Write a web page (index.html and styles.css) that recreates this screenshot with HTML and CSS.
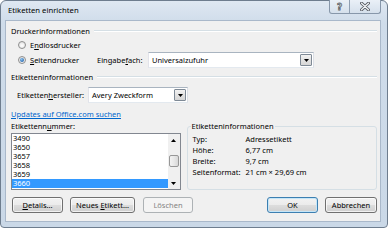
FILE: index.html
```html
<!DOCTYPE html>
<html lang="de">
<head>
<meta charset="utf-8">
<title>Etiketten einrichten</title>
<link rel="stylesheet" href="styles.css">
</head>
<body>
<div class="win">
  <div class="titlebar">
    <span class="title">Etiketten einrichten</span>
    <div class="caption">
      <span class="cbtn help">?</span>
      <span class="cbtn close"><svg width="10" height="9" viewBox="0 0 10 9"><path d="M1.5 1.2L8.5 7.8M8.5 1.2L1.5 7.8" stroke="#5a5f66" stroke-width="3" stroke-linecap="round"/><path d="M1.5 1.2L8.5 7.8M8.5 1.2L1.5 7.8" stroke="#f4f6f9" stroke-width="1.2" stroke-linecap="round"/></svg></span>
    </div>
  </div>
  <div class="client">
    <div class="head"><span>Druckerinformationen</span><i></i></div>
    <div class="rrow r1"><span class="radio"></span><span class="rlabel">E<u>n</u>dlosdrucker</span></div>
    <div class="rrow r2"><span class="radio on"></span><span class="rlabel"><u>S</u>eitendrucker</span><span class="flabel">Eingabe<u>f</u>ach:</span>
      <div class="combo wide"><span class="val">Universalzufuhr</span><span class="drop"><svg width="5" height="3" viewBox="0 0 5 3"><path d="M0 0H5L2.5 3Z" fill="#000"/></svg></span></div>
    </div>
    <div class="head h2"><span>Etiketteninformationen</span><i></i></div>
    <div class="mrow"><span class="mlabel">Etiketten<u>h</u>ersteller:</span>
      <div class="combo narrow"><span class="val">Avery Zweckform</span><span class="drop"><svg width="5" height="3" viewBox="0 0 5 3"><path d="M0 0H5L2.5 3Z" fill="#000"/></svg></span></div>
    </div>
    <div class="linkrow"><a class="link">Updates auf Office.com suchen</a></div>
    <div class="lower">
      <div class="listcol">
        <div class="llabel">Etikettenn<u>u</u>mmer:</div>
        <div class="listbox">
          <ul class="items">
            <li>3490</li>
            <li>3650</li>
            <li>3657</li>
            <li>3658</li>
            <li>3659</li>
            <li class="sel">3660</li>
          </ul>
          <div class="vscroll">
            <span class="sarrow"><svg width="5" height="3" viewBox="0 0 5 3"><path d="M0 3H5L2.5 0Z" fill="#000"/></svg></span>
            <span class="track"><span class="thumb"></span></span>
            <span class="sarrow"><svg width="5" height="3" viewBox="0 0 5 3"><path d="M0 0H5L2.5 3Z" fill="#000"/></svg></span>
          </div>
        </div>
      </div>
      <fieldset class="info">
        <legend>Etiketteninformationen</legend>
        <div class="irow"><span class="k">Typ:</span><span>Adressetikett</span></div>
        <div class="irow"><span class="k">Höhe:</span><span>6,77 cm</span></div>
        <div class="irow"><span class="k">Breite:</span><span>9,7 cm</span></div>
        <div class="irow"><span class="k">Seitenformat:</span><span>21 cm × 29,69 cm</span></div>
      </fieldset>
    </div>
    <div class="btnrow">
      <button class="btn b-details"><u>D</u>etails...</button>
      <button class="btn b-new">Neues <u>E</u>tikett...</button>
      <button class="btn b-del" disabled>Löschen</button>
      <span class="spacer"></span>
      <button class="btn b-ok default">OK</button>
      <button class="btn b-cancel">Abbrechen</button>
    </div>
  </div>
</div>
</body>
</html>
```

FILE: styles.css
```css
* { box-sizing: border-box; margin: 0; padding: 0; }
html, body { width: 388px; height: 228px; overflow: hidden; background: #ffffff; }
body { font-family: "Noto Sans", "Liberation Sans", sans-serif; font-size: 7.5px; color: #000; }
u { text-decoration: underline; text-underline-offset: 1px; }

.win {
  width: 388px; height: 228px;
  border: 1px solid #6e7d8e;
  border-radius: 6px 6px 4px 4px;
  background: linear-gradient(#dfe8f2, #cfdcea 22px, #cad8e7);
  padding: 0 6px 5px 4px;
  display: flex; flex-direction: column;
}
.titlebar { height: 19px; display: flex; align-items: flex-start; }
.title { padding-left: 3px; line-height: 19px; font-size: 7.7px; color: #000; }
.caption {
  margin-left: auto; margin-top: -1px; margin-right: 0;
  display: flex; height: 14px;
  border: 1px solid #8797aa; border-top: none;
  border-radius: 0 0 3px 3px;
  background: linear-gradient(#eaf0f7, #d5e0ec);
}
.cbtn { display: flex; align-items: center; justify-content: center; height: 13px; }
.help { width: 20px; border-right: 1px solid #8f9fb2; font-weight: bold; font-size: 9px; color: #f4f6f9;
  -webkit-text-stroke: 0.8px #5a5f66; font-family: "DejaVu Sans", sans-serif; }
.close { width: 30px; }

.client {
  flex: 1;
  background: #f0f0f0;
  border: 1px solid #a9b8ca;
  padding: 4px 3px 6px 5px;
  display: flex; flex-direction: column;
}

.head { height: 12px; display: flex; align-items: center; }
.head span { color: #000; padding-right: 4px; }
.head i { flex: 1; background: #d5dfe5; border-bottom: 1px solid #ffffff; height: 2px; }
.h2 { margin-top: 3px; }

.rrow { display: flex; align-items: center; padding-left: 7px; }
.r1 { height: 14px; margin-top: 1px; }
.r2 { height: 16px; }
.radio {
  width: 8px; height: 8px; border-radius: 50%;
  border: 1px solid #8e8f8f;
  background: radial-gradient(circle at 50% 60%, #ffffff 0, #f2f2f2 40%, #d7d7d7 100%);
  display: flex; align-items: center; justify-content: center;
  flex: none;
}
.radio.on::after {
  content: ""; width: 4px; height: 4px; border-radius: 50%;
  background: radial-gradient(circle at 40% 35%, #8ec5f0, #1e5fa8 80%);
}
.rlabel { margin-left: 4px; width: 67px; }
.flabel { width: 51px; }

.combo {
  height: 16px; background: #fff;
  border: 1px solid #abadb3;
  border-top-color: #a9b4c0; border-left-color: #e2e3ea; border-right-color: #dbdfe6; border-bottom-color: #e3e9ef;
  display: flex; align-items: center; padding: 1px;
}
.combo.wide { width: 166px; height: 16px; }
.combo.narrow { width: 100px; }
.combo .val { flex: 1; padding-left: 2px; }
.drop {
  width: 12px; height: 12px; flex: none;
  border: 1px solid #7f8a96; border-radius: 1px;
  background: linear-gradient(#f2f2f2, #e2e2e2 50%, #d6d6d6);
  display: flex; align-items: center; justify-content: center;
}
.drop svg { display: block; }

.mrow { display: flex; align-items: center; height: 16px; margin-top: 4px; padding-left: 6px; }
.mlabel { width: 71px; }

.linkrow { height: 12px; margin-top: 5px; display: flex; align-items: center; }
.link { color: #0066cc; text-decoration: underline; text-underline-offset: 1px; }

.lower { display: flex; height: 70px; }
.listcol { width: 170px; display: flex; flex-direction: column; }
.llabel { height: 12px; line-height: 12px; }
.listbox {
  margin-top: 1px; height: 57px;
  border: 1px solid #828790; background: #fff;
  display: flex;
}
.items { list-style: none; flex: 1; }
.items li { height: 9px; line-height: 9px; padding-left: 1px; }
.items li.sel { background: #3399ff; color: #fff; }
.vscroll { width: 12px; display: flex; flex-direction: column; background: #f0f0f0; }
.sarrow { height: 12px; display: flex; align-items: center; justify-content: center; }
.sarrow svg { display: block; }
.track { flex: 1; display: flex; flex-direction: column; align-items: center; }
.thumb {
  margin-top: 9px; width: 10px; height: 12px;
  border: 1px solid #979797; border-radius: 2px;
  background: linear-gradient(90deg, #f3f3f3, #e8e8e8 50%, #d8d8d8);
}

.info {
  margin-left: 6px; width: 191px;
  border: 1px solid #d5dfe5; border-radius: 3px;
  padding: 1px 4px 0 5px;
  min-width: 0;
}
.info legend { padding: 0 1px; line-height: 12px; height: 12px; margin-left: -2px; }
.irow { display: flex; height: 11px; align-items: center; }
.irow .k { width: 53px; }

.btnrow { display: flex; margin-top: 7px; height: 16px; padding-left: 1px; }
.btn {
  height: 16px;
  font-family: inherit; font-size: inherit; color: #000;
  border: 1px solid #707070; border-radius: 3px;
  background: linear-gradient(#f2f2f2, #ebebeb 50%, #dddddd 51%, #cfcfcf);
  box-shadow: inset 0 0 0 1px rgba(255,255,255,0.7);
}
.b-details { width: 51px; }
.b-new { width: 65px; margin-left: 7px; }
.b-del { width: 50px; margin-left: 8px; color: #838383; border-color: #adb2b5; background: #f4f4f4; box-shadow: none; }
.spacer { flex: 1; }
.b-ok { width: 51px; }
.b-ok.default { border-color: #3c7fb1; box-shadow: inset 0 0 0 1px #c5e6f8; }
.b-cancel { width: 52px; margin-left: 7px; }
```
